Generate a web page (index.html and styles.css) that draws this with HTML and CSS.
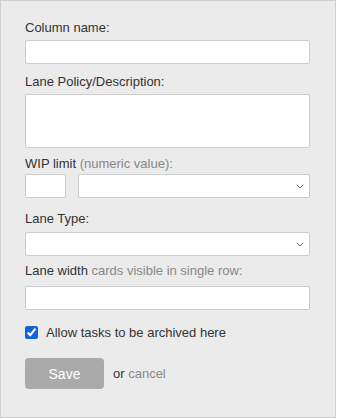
FILE: index.html
```html
<!DOCTYPE html>
<html lang="en">
<head>
    <meta charset="UTF-8">
    <meta name="viewport" content="width=device-width, initial-scale=1.0">
    <title>Edit Column</title>
    <link rel="stylesheet" href="styles.css">
</head>
<body>
    <div class="panel">
        <form class="column-form">
            <label class="field-label">Column name:</label>
            <input type="text" class="field-input">

            <label class="field-label label-policy">Lane Policy/Description:</label>
            <textarea class="field-input field-area"></textarea>

            <label class="field-label label-wip">WIP limit <span class="hint">(numeric value):</span></label>
            <div class="wip-row">
                <input type="text" class="field-input wip-number">
                <div class="select-wrap wip-select">
                    <select class="field-input field-select"></select>
                    <svg class="chevron" width="8" height="5" viewBox="0 0 8 5"><path d="M0.8 0.8 L4 4 L7.2 0.8" fill="none" stroke="#6a6a6a" stroke-width="1"/></svg>
                </div>
            </div>

            <label class="field-label label-type">Lane Type:</label>
            <div class="select-wrap">
                <select class="field-input field-select"></select>
                <svg class="chevron" width="8" height="5" viewBox="0 0 8 5"><path d="M0.8 0.8 L4 4 L7.2 0.8" fill="none" stroke="#6a6a6a" stroke-width="1"/></svg>
            </div>

            <label class="field-label label-width">Lane width <span class="hint">cards visible in single row:</span></label>
            <input type="text" class="field-input">

            <label class="check-row">
                <input type="checkbox" class="check" checked>
                Allow tasks to be archived here
            </label>

            <div class="actions">
                <button type="submit" class="save-btn">Save</button>
                <span class="or-text">or <a href="#" class="cancel-link">cancel</a></span>
            </div>
        </form>
    </div>
</body>
</html>
```

FILE: styles.css
```css
* { margin: 0; padding: 0; box-sizing: border-box; }
body {
    font-family: 'Liberation Sans', Arial, sans-serif;
    font-size: 13px;
    color: #333;
    background: #fff;
}
.panel {
    width: 336px;
    height: 418px;
    background: #ebebeb;
    border: 1px solid #cfcfcf;
    padding: 19px 25px 0 24px;
}
.field-label {
    display: block;
    line-height: 15px;
    margin-bottom: 5px;
}
.hint { color: #888; }
.field-input {
    display: block;
    width: 100%;
    height: 24px;
    background: #fff;
    border: 1px solid #ccc;
    border-radius: 2px;
    font-family: inherit;
    font-size: 13px;
    padding: 0 5px;
    outline: none;
}
.field-area {
    height: 54px;
    resize: none;
}
.label-policy { margin-top: 10px; }
.label-wip { margin-top: 8px; margin-bottom: 3px; }
.label-type { margin-top: 13px; margin-bottom: 6px; }
.label-width { margin-top: 7px; margin-bottom: 8px; }
.wip-row {
    display: flex;
    gap: 12px;
}
.wip-number { width: 41px; }
.select-wrap { position: relative; }
.wip-select { flex: 1; }
.field-select {
    appearance: none;
    -webkit-appearance: none;
}
.chevron {
    position: absolute;
    right: 6px;
    top: 10px;
    pointer-events: none;
}
.check-row {
    display: flex;
    align-items: center;
    gap: 8px;
    margin-top: 15px;
    line-height: 15px;
}
.check {
    width: 13px;
    height: 13px;
    accent-color: #1266d4;
}
.actions {
    display: flex;
    align-items: center;
    margin-top: 18px;
}
.save-btn {
    width: 79px;
    height: 31px;
    background: #aaa;
    color: #fff;
    border: none;
    border-radius: 4px;
    font-family: inherit;
    font-size: 14px;
    cursor: pointer;
}
.or-text { margin-left: 9px; }
.cancel-link {
    color: #888;
    text-decoration: none;
}
```
